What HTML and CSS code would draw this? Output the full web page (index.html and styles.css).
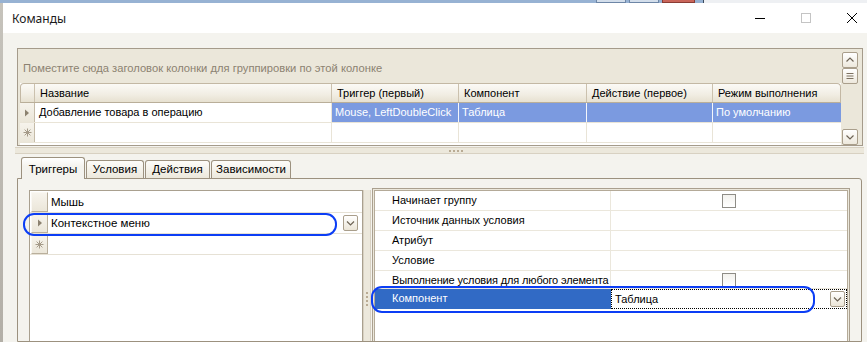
FILE: index.html
```html
<!DOCTYPE html>
<html lang="ru">
<head>
<meta charset="utf-8">
<title>Команды</title>
<link rel="stylesheet" href="styles.css">
</head>
<body>
<div class="desk-top">
  <span class="bgbtn"></span><span class="bgbtn"></span><span class="bgbtn red"></span>
  <span class="bg-rest"></span>
</div>
<div class="screen">
  <div class="behind"></div>
  <div class="window">
    <div class="titlebar">
      <div class="title">Команды</div>
      <div class="controls">
        <span class="ctl"><svg width="12" height="12" viewBox="0 0 12 12"><path d="M1 6.5H11" stroke="#000" stroke-width="1"/></svg></span>
        <span class="ctl"><svg width="12" height="12" viewBox="0 0 12 12"><rect x="1.5" y="1.5" width="9" height="9" fill="none" stroke="#c4c4c4" stroke-width="1"/></svg></span>
        <span class="ctl"><svg width="12" height="12" viewBox="0 0 12 12"><path d="M1 1L11 11M11 1L1 11" stroke="#000" stroke-width="1"/></svg></span>
      </div>
    </div>
    <div class="content">
      <div class="grid">
        <div class="grid-main">
          <div class="group-panel">Поместите сюда заголовок колонки для группировки по этой колонке</div>
          <div class="table">
            <div class="hrow">
              <div class="hind"></div>
              <div class="hc w1">Название</div>
              <div class="hc w2">Триггер (первый)</div>
              <div class="hc w3">Компонент</div>
              <div class="hc w4">Действие (первое)</div>
              <div class="hc w5 last">Режим выполнения</div>
            </div>
            <div class="drow">
              <div class="ind"><svg width="6" height="8" viewBox="0 0 6 8"><path d="M1 0.5L5 4L1 7.5Z" fill="#8c8270"/></svg></div>
              <div class="dc w1">Добавление товара в операцию</div>
              <div class="dc w2 sel">Mouse, LeftDoubleClick</div>
              <div class="dc w3 sel">Таблица</div>
              <div class="dc w4 sel"></div>
              <div class="dc w5 sel last">По умолчанию</div>
            </div>
            <div class="drow">
              <div class="ind"><svg width="9" height="9" viewBox="0 0 9 9"><path d="M4.5 0.5V8.5M0.5 4.5H8.5M1.6 1.6L7.4 7.4M7.4 1.6L1.6 7.4" stroke="#a59a88" stroke-width="1"/></svg></div>
              <div class="dc w1"></div>
              <div class="dc w2"></div>
              <div class="dc w3"></div>
              <div class="dc w4"></div>
              <div class="dc w5 last"></div>
            </div>
          </div>
        </div>
        <div class="vscroll">
          <span class="sbtn"><svg width="10" height="8" viewBox="0 0 10 8"><path d="M1.5 5.5L5 2L8.5 5.5" fill="none" stroke="#6e6455" stroke-width="1.2"/></svg></span>
          <span class="sbtn"><svg width="10" height="8" viewBox="0 0 10 8"><path d="M1.5 1.5H8.5M1.5 4H8.5M1.5 6.5H8.5" stroke="#7d7262" stroke-width="1"/></svg></span>
          <span class="sbtn bottom"><svg width="10" height="8" viewBox="0 0 10 8"><path d="M1.5 2.5L5 6L8.5 2.5" fill="none" stroke="#6e6455" stroke-width="1.2"/></svg></span>
        </div>
      </div>
      <div class="hsplit"><span class="dot"></span><span class="dot"></span><span class="dot"></span><span class="dot"></span></div>
      <div class="tabs">
        <div class="tab active t1">Триггеры</div>
        <div class="tab t2">Условия</div>
        <div class="tab t3">Действия</div>
        <div class="tab t4">Зависимости</div>
      </div>
      <div class="tabpage">
        <div class="left-grid">
          <div class="lrow">
            <div class="lind"></div>
            <div class="ltext">Мышь</div>
          </div>
          <div class="lrow">
            <div class="lind"><svg width="6" height="8" viewBox="0 0 6 8"><path d="M1 0.5L5 4L1 7.5Z" fill="#8c8270"/></svg></div>
            <div class="ltext">Контекстное меню</div>
            <span class="dd"><svg width="11" height="8" viewBox="0 0 11 8"><path d="M2 2.5L5.5 6L9 2.5" fill="none" stroke="#6e6455" stroke-width="1.2"/></svg></span>
          </div>
          <div class="lrow">
            <div class="lind"><svg width="9" height="9" viewBox="0 0 9 9"><path d="M4.5 0.5V8.5M0.5 4.5H8.5M1.6 1.6L7.4 7.4M7.4 1.6L1.6 7.4" stroke="#a59a88" stroke-width="1"/></svg></div>
            <div class="ltext"></div>
          </div>
        </div>
        <div class="vsplit"><span class="vdot"></span><span class="vdot"></span><span class="vdot"></span><span class="vdot"></span></div>
        <div class="prop-panel">
          <div class="prop-grid">
            <div class="prow">
              <div class="plabel">Начинает группу</div>
              <div class="pval center"><span class="chk"></span></div>
            </div>
            <div class="prow">
              <div class="plabel">Источник данных условия</div>
              <div class="pval"></div>
            </div>
            <div class="prow">
              <div class="plabel">Атрибут</div>
              <div class="pval"></div>
            </div>
            <div class="prow">
              <div class="plabel">Условие</div>
              <div class="pval"></div>
            </div>
            <div class="prow short">
              <div class="plabel">Выполнение условия для любого элемента</div>
              <div class="pval center top"><span class="chk"></span></div>
            </div>
            <div class="prow selected">
              <div class="plabel">Компонент</div>
              <div class="pval edit">Таблица<span class="dd pdd"><svg width="11" height="8" viewBox="0 0 11 8"><path d="M2 2.5L5.5 6L9 2.5" fill="none" stroke="#6e6455" stroke-width="1.2"/></svg></span></div>
            </div>
          </div>
        </div>
      </div>
    </div>
  </div>
</div>
<div class="ring ring1"></div>
<div class="ring ring2"></div>
</body>
</html>
```
FILE: styles.css
```css
* { box-sizing: border-box; margin: 0; padding: 0; }
html, body { width: 867px; height: 342px; overflow: hidden; }
body {
  font-family: "Liberation Sans", Arial, sans-serif;
  font-size: 11px;
  color: #000;
  background: #b9b5ad;
  position: relative;
}

/* strip of desktop / window behind */
.desk-top { height: 3px; display: flex; background: #97b2d3; padding-left: 596px; }
.bgbtn { width: 30px; height: 3px; margin-right: 3px; background: #d3deeb; border: 1px solid #6d86a6; border-top: none; }
.bgbtn.red { width: 33px; background: #c9655a; border-color: #8a3c34; }
.bg-rest { margin-left: 5px; flex: 1; background: #eef0f3; border-left: 1px solid #3b4a5c; }

.screen { display: flex; height: 339px; }
.behind { width: 3px; flex: none; background: linear-gradient(#c6c3bc, #b3afa7); }
.window { width: 872px; flex: none; background: #f4f3ee; display: flex; flex-direction: column; }

.titlebar { height: 30px; flex: none; background: #fff; display: flex; align-items: center; padding-left: 9px; }
.title { flex: 1; font-family: "Noto Sans", "Open Sans", sans-serif; font-size: 12px; color: #1b1b1b; }
.controls { display: flex; height: 100%; }
.ctl { width: 46px; height: 100%; display: flex; align-items: center; justify-content: center; }

.content { flex: 1; display: flex; flex-direction: column; padding: 15px 12px 0 14px; min-height: 0; }

/* main grid */
.grid { height: 98px; flex: none; display: flex; border: 1px solid #a59b8b; background: #ebe7da; }
.grid-main { flex: 1; display: flex; flex-direction: column; padding-left: 2px; }
.group-panel { height: 34px; flex: none; color: #8c8271; padding: 13px 0 0 3px; line-height: 13px; white-space: nowrap; font-size: 11.2px; }
.table { flex: 1; background: #fff; overflow: hidden; }
.hrow {
  height: 20px; display: flex;
  background: linear-gradient(#fbfaf6, #f1ede3 60%, #e7e1d1);
  border: 1px solid #c3b8a4; border-bottom-color: #b9ae99;
  border-radius: 4px 4px 0 0;
}
.hind { width: 14px; flex: none; border-right: 1px solid #cbc1ae; }
.hc { padding-left: 5px; line-height: 18px; border-right: 1px solid #cbc1ae; white-space: nowrap; overflow: hidden; }
.hc.last { border-right: none; }
.w1 { width: 297px; flex: none; }
.w2 { width: 127px; flex: none; }
.w3 { width: 128px; flex: none; }
.w4 { width: 126px; flex: none; }
.w5 { flex: 1; }
.drow { height: 20px; display: flex; border-bottom: 1px solid #e9e4d7; }
.ind {
  width: 15px; flex: none; display: flex; align-items: center; justify-content: center;
  background: linear-gradient(#f6f3ec, #ebe6d9); border-right: 1px solid #c5bba8;
}
.dc { padding-left: 3px; line-height: 19px; border-right: 1px solid #e9e4d7; white-space: nowrap; overflow: hidden; }
.dc.last { border-right: none; }
.dc.sel { background: #7b9ae0; color: #fff; border-right-color: #f4f6fb; }
.dc.w1 { padding-left: 4px; }

.vscroll { width: 21px; flex: none; display: flex; flex-direction: column; padding: 3px 4px 0 1px; }
.sbtn {
  width: 16px; height: 16px; display: flex; align-items: center; justify-content: center;
  border: 1px solid #a99e8b; border-radius: 2px; background: linear-gradient(#ffffff, #ede8dc);
}
.sbtn.bottom { margin-top: auto; }

/* horizontal splitter */
.hsplit {
  height: 7px; flex: none; margin: 1px -1px 0 -2px;
  border-top: 1px solid #d8d1c2; border-bottom: 1px solid #d8d1c2; background: #ece8dc;
  display: flex; align-items: center; justify-content: center; gap: 2px; padding-left: 32px;
}
.dot { width: 2px; height: 2px; background: #b9ab94; }

/* tabs */
.tabs { height: 24px; flex: none; display: flex; align-items: flex-end; padding-left: 4px; position: relative; z-index: 1; }
.tab {
  height: 18px; border: 1px solid #9c917f; border-bottom: none; border-radius: 3px 3px 0 0;
  background: linear-gradient(#fdfcf9, #ece8dc); text-align: center; line-height: 17px; font-size: 11.5px;
  margin-right: 1px;
}
.tab.active { height: 22px; margin-bottom: -1px; background: linear-gradient(#ffffff, #f4f3ee 40%); line-height: 23px; }
.t1 { width: 64px; }
.t2 { width: 58px; }
.t3 { width: 65px; }
.t4 { width: 80px; }

.tabpage {
  flex: 1; display: flex; border: 1px solid #9c917f; border-radius: 0 3px 0 0;
  margin-right: 1px; padding: 11px 11px 0 11px; min-height: 0;
}

/* left grid */
.left-grid { width: 334px; flex: none; border: 1px solid #a9a08f; border-bottom: none; background: #fff; padding-top: 1px; }
.lrow { height: 21px; display: flex; align-items: stretch; border-bottom: 1px solid #e6e1d5; position: relative; }
.lind {
  width: 17px; flex: none; margin-left: 1px; display: flex; align-items: center; justify-content: center;
  background: linear-gradient(#f7f4ed, #ebe6d9); border: 1px solid #b9af9c; border-top-color: #faf8f3; border-left-color: #faf8f3;
}
.ltext { flex: 1; padding-left: 3px; line-height: 20px; font-size: 11.5px; }
.dd {
  width: 15px; height: 16px; display: flex; align-items: center; justify-content: center;
  border: 1px solid #a99e8b; border-radius: 2px; background: linear-gradient(#ffffff, #ebe5d7);
  align-self: center; margin-right: 4px;
}

/* vertical splitter */
.vsplit {
  width: 8px; flex: none; border-left: 1px solid #d8d1c2; border-right: 1px solid #d8d1c2; background: #ece8dc;
  display: flex; flex-direction: column; align-items: center; gap: 2px; padding-top: 102px; margin-right: 1px;
}
.vdot { width: 2px; height: 2px; background: #b9ab94; }

/* property panel */
.prop-panel { flex: 1; margin-top: -2px; border: 1px solid #aaa08f; border-bottom: none; padding: 1px 1px 0 1px; background: #ece8dc; }
.prop-grid { height: 100%; border: 1px solid #b4aa98; border-bottom: none; background: #fff; }
.prow { height: 20px; display: flex; border-bottom: 1px solid #ebe7dc; }
.prow.short { height: 18px; }
.plabel { width: 236px; flex: none; padding-left: 17px; line-height: 19px; color: #000; border-right: 1px solid #ebe7dc; white-space: nowrap; overflow: hidden; }
.prow.short .plabel { letter-spacing: -0.15px; line-height: 18px; }
.pval { flex: 1; display: flex; align-items: center; }
.pval.center { justify-content: center; }
.pval.top { align-items: flex-start; padding-top: 2px; }
.chk { width: 14px; height: 14px; border: 1px solid #8e8c86; background: linear-gradient(#f3f2ee, #ffffff); }
.prow.selected { border-bottom: none; }
.prow.selected .plabel { background: #316ac5; color: #fff; border-right: none; }
.pval.edit { border: 1px dotted #000; padding-left: 3px; justify-content: space-between; }
.pdd { margin-right: 1px; }

/* annotation rings */
.ring { position: absolute; border: 2px solid #0c3ef5; border-radius: 11px; pointer-events: none; }
.ring1 { left: 23px; top: 213px; width: 314px; height: 23px; }
.ring2 { left: 371px; top: 286px; width: 444px; height: 27px; }
```
